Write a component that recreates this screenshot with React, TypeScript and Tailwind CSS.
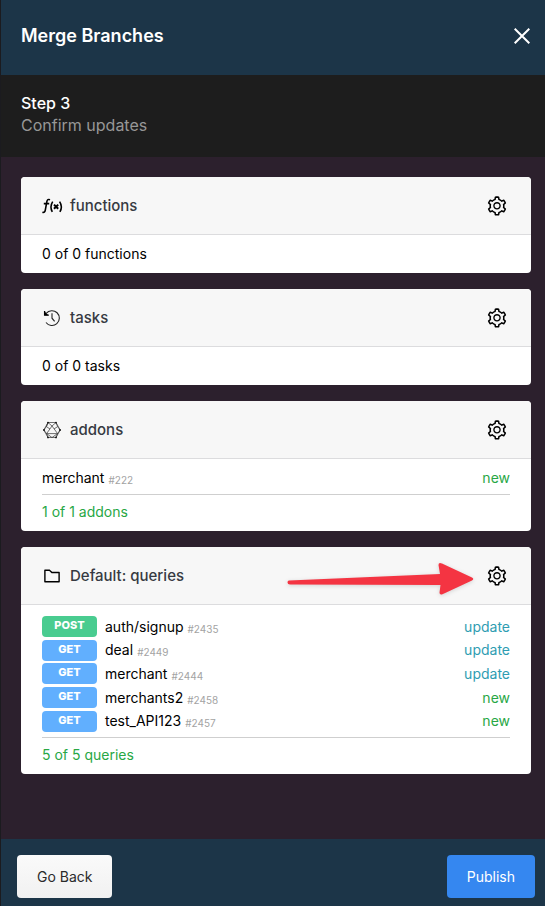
import type { ReactNode } from "react";
import { AiOutlineFolder, AiOutlineSetting } from "react-icons/ai";

type Status = "new" | "update";
type Item = { name: string; id: string; status: Status; method?: "POST" | "GET" };

const addons: Item[] = [{ name: "merchant", id: "#222", status: "new" }];

const queries: Item[] = [
  { method: "POST", name: "auth/signup", id: "#2435", status: "update" },
  { method: "GET", name: "deal", id: "#2449", status: "update" },
  { method: "GET", name: "merchant", id: "#2444", status: "update" },
  { method: "GET", name: "merchants2", id: "#2458", status: "new" },
  { method: "GET", name: "test_API123", id: "#2457", status: "new" },
];

function FunctionIcon() {
  return (
    <svg aria-hidden="true" width="22" height="20" viewBox="0 0 22 20" fill="none" stroke="#000" strokeWidth="1.6">
      <path d="M8 3.800C6.200 3 5.200 3.600 4.900 5.400L3.300 14.200C3 16 2 16.700.4 16.200M1.800 7.600h5.400" />
      <path d="M10.700 5.600Q7.500 10.600 10.300 15.900M17.600 5.600Q20.900 10.600 17.900 15.900" />
      <path d="m12 8.600 4.200 4.200M16.200 8.600 12 12.800" strokeWidth="2" />
    </svg>
  );
}

function HistoryIcon() {
  return (
    <svg aria-hidden="true" width="20" height="20" viewBox="0 0 20 20" fill="none" stroke="#222" strokeWidth="1.1">
      <path d="M4.2 5.4A7.4 7.4 0 1 1 4 14.5" />
      <path d="M2.6 3v4.2h4.2" stroke="#000" strokeWidth="1.3" />
      <path d="M2.6 3.4v3.8h3.8z" fill="#000" stroke="none" />
      <path d="M10 5.200v5l2.600 3.200" />
    </svg>
  );
}

function AddonIcon() {
  return (
    <svg aria-hidden="true" width="20" height="20" viewBox="0 0 20 20" fill="none" stroke="#333" strokeWidth="0.7" strokeLinejoin="round">
      <path d="M6 2.500h8L18.200 10 14 17.500H6L1.800 10z" />
      <path d="M6 2.500 4.400 6.600 1.800 10l2.800 3.600L6 17.500M14 2.500l1.600 4.100 2.600 3.400-2.600 3.600-1.600 3.900" />
      <path d="M4.400 6.600 6 2.500l4 3.500 4-3.500M4.600 13.600 10 6l5.600 7.600M4.600 13.600h11L10 17.500zM4.400 6.600 8 9M15.600 6.600 12 9" />
      <g fill="#111" stroke="none">
        <circle cx="6" cy="2.600" r=".9" />
        <circle cx="14" cy="2.600" r=".9" />
        <circle cx="18" cy="10" r=".9" />
        <circle cx="14" cy="17.400" r=".9" />
        <circle cx="6" cy="17.400" r=".9" />
        <circle cx="2" cy="10" r=".9" />
      </g>
    </svg>
  );
}

function Card({ icon, title, pointer, children }: { icon: ReactNode; title: string; pointer?: boolean; children: ReactNode }) {
  return (
    <section className="rounded bg-white">
      <header className="relative flex h-[58px] items-center rounded-t border-b border-[#dcdcde] bg-[#f7f7f7] px-[21px]">
        <span className="flex w-7 items-center">{icon}</span>
        <h2 className="text-[15px] leading-6 font-medium text-[#363a42]">{title}</h2>
        <button type="button" aria-label={`${title} settings`} className="-mr-0.5 ml-auto p-1">
          <AiOutlineSetting className="size-[22px] text-black" />
        </button>
        {pointer && (
          <svg
            aria-hidden="true"
            className="absolute top-[14px] right-[55px] drop-shadow-sm"
            width="190"
            height="38"
            viewBox="0 0 190 38"
            fill="#f43442"
          >
            <path d="M3 19.500 154 13 152.500 4Q152.500 1 156 2.500L186 16.500Q188.500 18 186 19.500L157 33Q153.500 34.500 153.500 31.500L154.500 24 4 23.500Q1.500 23.500 1.500 21.500Q1.500 19.600 3 19.500Z" />
          </svg>
        )}
      </header>
      {children}
    </section>
  );
}

function Row({ item }: { item: Item }) {
  return (
    <li className="flex items-center">
      {item.method && (
        <span
          className={`mr-2 flex h-[21px] w-[55px] justify-center rounded text-[11px] leading-[18px] font-extrabold text-white ${
            item.method === "POST" ? "bg-[#49cc90]" : "bg-[#61affe]"
          }`}
        >
          {item.method}
        </span>
      )}
      <span>{item.name}</span>
      <span className="mt-1 ml-1 text-[10px] leading-5 text-[#a3a3a3]">{item.id}</span>
      <span className={`ml-auto ${item.status === "new" ? "text-[#28a745]" : "text-[#2f9db2]"}`}>{item.status}</span>
    </li>
  );
}

export default function App() {
  return (
    <main className="flex min-h-screen flex-col border-l border-[#1b1b1f] bg-[#2c202d] font-['Inter',sans-serif] text-[14px] leading-6 text-black">
      <header className="flex h-[75px] items-center justify-between bg-[#1c3548] pr-[11px] pl-5 text-white">
        <h1 className="-mt-1 text-[18px] leading-6 font-semibold">Merge Branches</h1>
        <button type="button" aria-label="Close" className="-mt-1 p-1">
          <svg width="16" height="16" viewBox="0 0 16 16" fill="none" stroke="currentColor" strokeWidth="2">
            <path d="m.7.7 14.600 14.600M15.300.7.7 15.300" />
          </svg>
        </button>
      </header>

      <div className="bg-[#1d1d1d] px-5 pt-[17px] pb-[21px] text-[16px] leading-[22px]">
        <p className="font-medium text-white">Step 3</p>
        <p className="text-[#979797]">Confirm updates</p>
      </div>

      <div className="flex grow flex-col gap-4 py-5 pr-[14px] pl-5">
        <Card icon={<FunctionIcon />} title="functions">
          <p className="px-[21px] py-[7px]">0 of 0 functions</p>
        </Card>

        <Card icon={<HistoryIcon />} title="tasks">
          <p className="px-[21px] py-[7px]">0 of 0 tasks</p>
        </Card>

        <Card icon={<AddonIcon />} title="addons">
          <div className="px-[21px] py-[7px]">
            <ul>
              {addons.map((item) => (
                <Row key={item.id} item={item} />
              ))}
            </ul>
            <p className="mt-1 border-t border-[#cfcfcf] pt-[5px] text-[#28a745]">1 of 1 addons</p>
          </div>
        </Card>

        <Card icon={<AiOutlineFolder className="size-5 text-black" />} title="Default: queries" pointer>
          <div className="px-[21px] pt-[10px] pb-[7px]">
            <ul className="grid h-[118px] auto-rows-fr">
              {queries.map((item) => (
                <Row key={item.id} item={item} />
              ))}
            </ul>
            <p className="mt-1 border-t border-[#cfcfcf] pt-[5px] text-[#28a745]">5 of 5 queries</p>
          </div>
        </Card>
      </div>

      <footer className="flex items-start justify-between bg-[#1c3548] pt-4 pr-[10px] pb-2 pl-4">
        <button type="button" className="h-[43px] rounded bg-linear-to-b from-[#fafafa] to-[#f1f1f1] px-5 text-[#2b2b2b]">
          Go Back
        </button>
        <button type="button" className="h-[43px] rounded bg-[#3587f0] px-5 text-white">
          Publish
        </button>
      </footer>
    </main>
  );
}
